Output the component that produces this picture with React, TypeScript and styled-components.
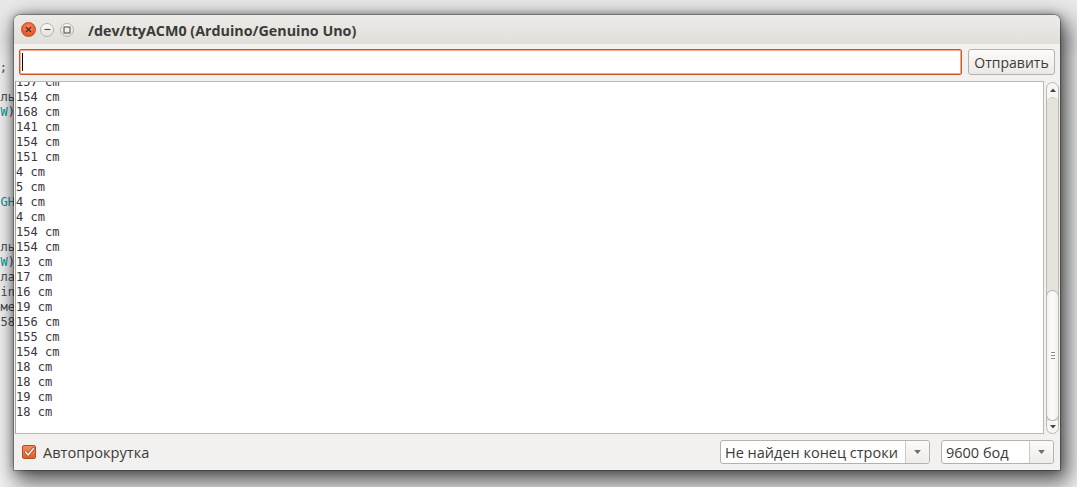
import React from 'react';
import styled, { createGlobalStyle } from 'styled-components';

const UI = `"Open Sans", "Noto Sans", "DejaVu Sans", sans-serif`;
const MONO = `"DejaVu Sans Mono", "Liberation Mono", monospace`;

const Global = createGlobalStyle`
  html, body { margin: 0; padding: 0; }
  body { width: 1077px; height: 487px; overflow: hidden; background: #ececec; }
  * { box-sizing: border-box; }
`;

const Desktop = styled.div`
  position: relative;
  width: 1077px;
  height: 487px;
  overflow: hidden;
  background: #ececec;
`;

const IdeWindow = styled.div`
  position: absolute;
  left: 0;
  top: 0;
  width: 1077px;
  height: 487px;
  background: linear-gradient(#e9e9e9 0, #e9e9e9 40px, #f4f4f4 60px);
  padding-top: 60px;
`;

const CodeColumn = styled.div`
  width: 15px;
  overflow: hidden;
  font-family: ${MONO};
  font-size: 12px;
  line-height: 15px;
  color: #434f54;
`;

const CodeLine = styled.div<{ $pad?: number }>`
  height: 15px;
  display: flex;
  justify-content: flex-end;
  white-space: pre;
  padding-right: ${(p) => p.$pad ?? 0}px;
`;

const Kw = styled.span`
  color: #00979c;
`;

const SerialWindow = styled.div`
  position: absolute;
  left: 14px;
  top: 15px;
  width: 1046px;
  height: 455px;
  display: flex;
  flex-direction: column;
  background: #f2f1f0;
  border-radius: 6px 6px 0 0;
  box-shadow: 0 0 0 1px rgba(0, 0, 0, 0.25), 0 0 8px rgba(0, 0, 0, 0.4),
    5px 9px 22px 4px rgba(0, 0, 0, 0.62);
`;

const TitleBar = styled.div`
  height: 29px;
  flex: none;
  display: flex;
  align-items: center;
  padding-left: 7px;
  border-radius: 6px 6px 0 0;
  background: linear-gradient(#ecebe8, #e2dfda);
`;

const WinButton = styled.div<{ $close?: boolean }>`
  width: ${(p) => (p.$close ? 15 : 14)}px;
  height: ${(p) => (p.$close ? 15 : 14)}px;
  border-radius: 50%;
  margin-right: ${(p) => (p.$close ? 4 : 6)}px;
  display: flex;
  align-items: center;
  justify-content: center;
  background: ${(p) =>
    p.$close
      ? 'radial-gradient(circle at 50% 35%, #f79066, #e8572a 70%, #d24a1e)'
      : 'linear-gradient(#fbfaf9, #e4e1dc)'};
  border: 1px solid ${(p) => (p.$close ? '#c34a1f' : '#b7b2aa')};
`;

const Title = styled.div`
  margin-left: 8px;
  font-family: ${UI};
  font-weight: 700;
  font-size: 14.3px;
  color: #3c3b37;
  padding-top: 2px;
`;

const InputRow = styled.div`
  display: flex;
  gap: 6px;
  margin: 5px 5px 0 5px;
  height: 26px;
  flex: none;
`;

const Input = styled.div`
  flex: 1;
  background: #fff;
  border: 1px solid #c65a2c;
  box-shadow: inset 0 0 0 1px #f4a88a;
  border-radius: 2px;
  display: flex;
  align-items: center;
  padding-left: 2px;
`;

const Caret = styled.div`
  width: 1px;
  height: 18px;
  background: #000;
`;

const SendButton = styled.div`
  width: 87px;
  display: flex;
  align-items: center;
  justify-content: center;
  font-family: ${UI};
  font-size: 14px;
  color: #3c3b37;
  background: linear-gradient(#fcfbfa, #ebe9e5);
  border: 1px solid #b6b1a9;
  border-radius: 3px;
`;

const OutputRow = styled.div`
  display: flex;
  margin: 6px 1px 0 1px;
  height: 353px;
  flex: none;
  gap: 2px;
`;

const TextArea = styled.div`
  flex: 1;
  background: #fff;
  border: 1px solid #bdb8b1;
  border-left-color: #a9a5a0;
  overflow: hidden;
`;

const Lines = styled.div`
  margin-top: -7px;
  font-family: ${MONO};
  font-size: 12px;
  line-height: 15px;
  color: #3a3340;
  white-space: pre;
`;

const ScrollBar = styled.div`
  width: 13px;
  margin-top: 1px;
  display: flex;
  flex-direction: column;
  border: 1px solid #bcb7af;
  border-radius: 7px;
  background: #f7f6f5;
  overflow: hidden;
`;

const Arrow = styled.div<{ $h: number }>`
  height: ${(p) => p.$h}px;
  flex: none;
  display: flex;
  align-items: center;
  justify-content: center;
`;

const Track = styled.div`
  flex: 1;
  display: flex;
  flex-direction: column;
  justify-content: flex-end;
  background: #e6e2dc;
  border-radius: 6px 6px 0 0;
  border-top: 1px solid #cfcac3;
`;

const Thumb = styled.div`
  height: 131px;
  margin: 0 -1px;
  border: 1px solid #b4afa7;
  border-radius: 7px;
  background: linear-gradient(90deg, #f4f3f1, #fcfcfb 50%, #f1f0ee);
  display: flex;
  flex-direction: column;
  align-items: center;
  justify-content: center;
  gap: 2px;
`;

const Grip = styled.div`
  width: 4px;
  height: 1px;
  background: #8f8a83;
`;

const BottomBar = styled.div`
  flex: 1;
  display: flex;
  align-items: center;
  padding: 0 6px 0 8px;
`;

const CheckBox = styled.div`
  width: 14px;
  height: 14px;
  border-radius: 2px;
  border: 1px solid #b44c22;
  background: linear-gradient(#f48a5a, #e0602e);
  display: flex;
  align-items: center;
  justify-content: center;
`;

const Label = styled.div`
  margin-left: 7px;
  font-family: ${UI};
  font-size: 14.6px;
  color: #3c3b37;
  flex: 1;
`;

const Select = styled.div<{ $w: number }>`
  width: ${(p) => p.$w}px;
  height: 24px;
  display: flex;
  background: #fff;
  border: 1px solid #b6b1a9;
  border-radius: 3px;
  font-family: ${UI};
  font-size: 14.5px;
  color: #3c3b37;
  & + & {
    margin-left: 11px;
  }
`;

const SelectText = styled.div`
  flex: 1;
  display: flex;
  align-items: center;
  padding-left: 4px;
  white-space: nowrap;
  overflow: hidden;
`;

const SelectArrow = styled.div`
  width: 24px;
  display: flex;
  align-items: center;
  justify-content: center;
  border-left: 1px solid #cdc8c1;
  background: linear-gradient(#fbfaf9, #efede9);
  border-radius: 0 3px 3px 0;
`;

const Tri = ({ up, color = '#4a4843', w = 6 }: { up?: boolean; color?: string; w?: number }) => (
  <svg width={w} height={w / 2 + 1} viewBox="0 0 6 4">
    {up ? <path d="M0 4 L3 0.5 L6 4 Z" fill={color} /> : <path d="M0 0 L6 0 L3 3.5 Z" fill={color} />}
  </svg>
);

const serial = [
  '157', '154', '168', '141', '154', '151', '4', '5', '4', '4', '154', '154',
  '13', '17', '16', '19', '156', '155', '154', '18', '18', '19', '18',
];

export default function App() {
  return (
    <Desktop>
      <Global />
      <IdeWindow>
        <CodeColumn>
          <CodeLine $pad={8}>;</CodeLine>
          <CodeLine />
          <CodeLine>ль</CodeLine>
          <CodeLine>
            <Kw>W</Kw>
            <span>)</span>
          </CodeLine>
          <CodeLine />
          <CodeLine />
          <CodeLine />
          <CodeLine />
          <CodeLine />
          <CodeLine>
            <Kw>GH</Kw>
          </CodeLine>
          <CodeLine />
          <CodeLine />
          <CodeLine>ль</CodeLine>
          <CodeLine>
            <Kw>W</Kw>
            <span>)</span>
          </CodeLine>
          <CodeLine>ла</CodeLine>
          <CodeLine>in</CodeLine>
          <CodeLine>ме</CodeLine>
          <CodeLine>58</CodeLine>
        </CodeColumn>
      </IdeWindow>

      <SerialWindow>
        <TitleBar>
          <WinButton $close>
            <svg width="7" height="7" viewBox="0 0 7 7">
              <path d="M1 1 L6 6 M6 1 L1 6" stroke="#5a2a18" strokeWidth="1.3" />
            </svg>
          </WinButton>
          <WinButton>
            <svg width="7" height="7" viewBox="0 0 7 7">
              <path d="M0.5 3.5 H6.5" stroke="#4a4843" strokeWidth="1.1" />
            </svg>
          </WinButton>
          <WinButton>
            <svg width="8" height="8" viewBox="0 0 8 8">
              <rect x="1" y="1" width="6" height="6" fill="none" stroke="#4a4843" strokeWidth="1" />
            </svg>
          </WinButton>
          <Title>/dev/ttyACM0 (Arduino/Genuino Uno)</Title>
        </TitleBar>

        <InputRow>
          <Input>
            <Caret />
          </Input>
          <SendButton>Отправить</SendButton>
        </InputRow>

        <OutputRow>
          <TextArea>
            <Lines>
              {serial.map((n, i) => (
                <div key={i}>{n} cm</div>
              ))}
            </Lines>
          </TextArea>
          <ScrollBar>
            <Arrow $h={14}>
              <Tri up />
            </Arrow>
            <Track>
              <Thumb>
                <Grip />
                <Grip />
                <Grip />
              </Thumb>
            </Track>
            <Arrow $h={12}>
              <Tri />
            </Arrow>
          </ScrollBar>
        </OutputRow>

        <BottomBar>
          <CheckBox>
            <svg width="11" height="10" viewBox="0 0 11 10">
              <path d="M1.5 5 L4.2 8 L9.5 1.5" fill="none" stroke="#5b3524" strokeWidth="3" strokeLinecap="round" strokeLinejoin="round" opacity="0.55" />
              <path d="M1.5 5 L4.2 8 L9.5 1.5" fill="none" stroke="#f6ede8" strokeWidth="1.6" strokeLinecap="round" strokeLinejoin="round" />
            </svg>
          </CheckBox>
          <Label>Автопрокрутка</Label>
          <Select $w={210}>
            <SelectText>Не найден конец строки</SelectText>
            <SelectArrow>
              <Tri color="#6f6c67" w={7} />
            </SelectArrow>
          </Select>
          <Select $w={113}>
            <SelectText>9600 бод</SelectText>
            <SelectArrow>
              <Tri color="#6f6c67" w={7} />
            </SelectArrow>
          </Select>
        </BottomBar>
      </SerialWindow>
    </Desktop>
  );
}
